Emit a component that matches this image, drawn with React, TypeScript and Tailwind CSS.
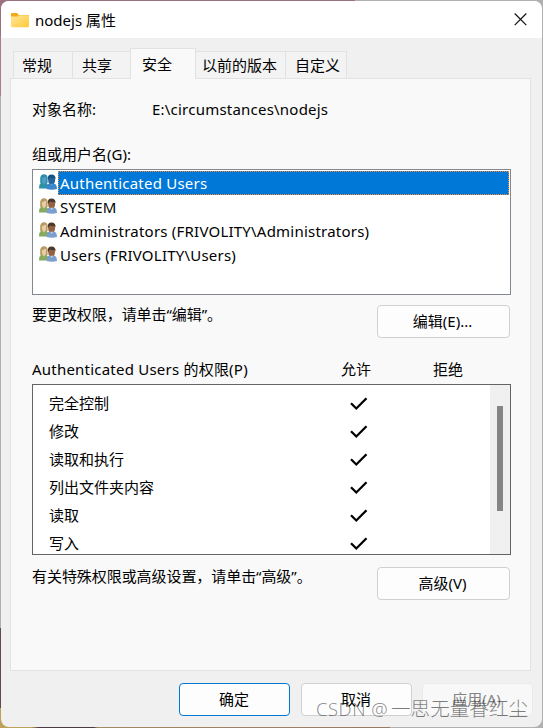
import React, { useState } from "react";

const TABS = [
  { label: "常规", className: "w-[60px] border-x pl-[8px]" },
  { label: "共享", className: "w-[57px] pl-[9px]" },
  { label: "安全", className: "w-[66px] border-x pl-[11px]" },
  { label: "以前的版本", className: "w-[90px] border-r pl-[6px]" },
  { label: "自定义", className: "w-[61px] border-r pl-[9px]" },
];

const GROUPS = [
  "Authenticated Users",
  "SYSTEM",
  "Administrators (FRIVOLITY\\Administrators)",
  "Users (FRIVOLITY\\Users)",
];

const PERMISSIONS = [
  "完全控制",
  "修改",
  "读取和执行",
  "列出文件夹内容",
  "读取",
  "写入",
];

const FolderIcon = () => (
  <svg width="19" height="16" viewBox="0 0 19 16">
    <defs>
      <linearGradient id="folder" x1="0" y1="0" x2="1" y2="1">
        <stop offset="0" stopColor="#ffe69b" />
        <stop offset="1" stopColor="#ffc937" />
      </linearGradient>
    </defs>
    <path d="M1 2Q1 1 2 1H6.500q1 0 1.500 1l.7 1H18q1 0 1 1v4H1z" fill="#f2ab14" />
    <path d="M1 4.500h6.500L9 3.200h8.800q1.200 0 1.200 1.200V14q0 1.200-1.200 1.200H2.200Q1 15.200 1 14z" fill="url(#folder)" />
  </svg>
);

const UsersIcon = ({ selected }: { selected: boolean }) => {
  const c = selected
    ? { hair: "#2d8fae", face: "#4f9fc4", top: "#2f91a8", hair2: "#17517f", face2: "#26649a", top2: "#3c86cc" }
    : { hair: "#b99a62", face: "#e6cda6", top: "#86a95c", hair2: "#4a382c", face2: "#916242", top2: "#7b9fce" };
  return (
    <svg width="18" height="16" viewBox="0 0 18 16" className="-mt-[3px]">
      <path d="M0 14.500q0-5 2.500-5.800l5 .2q2 1 2 5.600z" fill={c.top} />
      <path d="M1.200 9V4.200Q1.500.300 5 .300t3.600 3.500V9z" fill={c.hair} />
      <path d="M3 4.200Q5 3.500 7 2.500q.9 6.300-2 6.700-2.400-.6-2-5z" fill={c.face} />
      <path d="M3.500 8.600L5 10.800l1.500-2.200v-1h-3z" fill={c.face} />
      <path d="M7.500 15q-.2-4.800 3-5.800h4q3.500.8 3.500 5.800-5.200 1.300-10.500 0z" fill={c.top2} />
      <ellipse cx="12.600" cy="5.700" rx="3.500" ry="4.600" fill={c.face2} />
      <path d="M8.800 5.500Q8.300.600 12.500.600t4.200 4.900l-.9-1.400q-2.700.3-4.500-.6-1.500.6-1.600 2z" fill={c.hair2} />
      <path d="M11.400 9.700l1.300 2 1.300-2z" fill={selected ? "#5ba0dc" : "#dce6f2"} />
    </svg>
  );
};

const CheckIcon = () => (
  <svg width="18" height="14" viewBox="0 0 18 14">
    <path d="M1 6.300l5.300 5.200L16.500 1.200" fill="none" stroke="#000" strokeWidth="2.300" />
  </svg>
);

const App = () => {
  const [activeTab, setActiveTab] = useState("安全");
  const [selected, setSelected] = useState(GROUPS[0]);

  return (
    <div className="relative flex h-[728px] w-[543px] flex-col overflow-hidden bg-[#b0b0b0] font-['Noto_Sans','Noto_Sans_CJK_SC',sans-serif] text-[15px] leading-5 text-black">
      {/* desktop showing around the window edge */}
      <div className="flex h-9 w-full shrink-0">
        <div className="w-[355px] bg-[#9b7080]" />
      </div>
      <div className="h-[60px] w-2 shrink-0 bg-[#a87f88]" />
      <div className="mt-auto h-[80px] w-2 shrink-0 bg-[#5f4a4c]" />
      <div className="h-5 w-[390px] shrink-0 bg-[linear-gradient(90deg,#bfa25a_0%,#bfa25a_8%,#4a3c44_10%,#4a3c44_24%,#a08a60_25%,#9b7868_100%)]" />

      <div className="absolute inset-px flex flex-col overflow-hidden rounded-lg bg-[#f0f0f0]">
        <div className="flex h-[37px] shrink-0 items-center bg-white pl-[9px] pr-[15px]">
          <FolderIcon />
          <span className="ml-[6px]">nodejs 属性</span>
          <button type="button" className="ml-auto">
            <svg width="13" height="13" viewBox="0 0 13 13">
              <path d="M.7.500l11.600 11.600M12.300.500L.7 12.100" fill="none" stroke="#111" strokeWidth="1.200" />
            </svg>
          </button>
        </div>

        <div className="relative z-10 mt-[10px] flex h-[31px] shrink-0 items-end pl-[12px]">
          {TABS.map((tab) => (
            <button
              key={tab.label}
              type="button"
              onClick={() => setActiveTab(tab.label)}
              className={`shrink-0 whitespace-nowrap border-t border-[#e2e2e2] text-left ${tab.className} ${
                activeTab === tab.label
                  ? "h-[31px] bg-[#f9f9f9] pb-px"
                  : "mb-px h-[27px] bg-[#f3f3f3]"
              }`}
            >
              {tab.label}
            </button>
          ))}
        </div>

        <div className="-mt-px ml-[9px] h-[593px] w-[521px] shrink-0 border border-[#e2e2e2] bg-[#f9f9f9] pl-[21px]">
          <div className="flex pt-5">
            <span className="w-[120px]">对象名称:</span>
            <span className="tracking-[0.22px]">E:\circumstances\nodejs</span>
          </div>

          <div className="mt-[25px]">组或用户名(G):</div>
          <div className="mt-[5px] h-[126px] w-[479px] border border-[#828790] bg-white p-px">
            {GROUPS.map((group) => (
              <div
                key={group}
                onClick={() => setSelected(group)}
                className="flex h-6 items-center pl-[5px]"
              >
                <UsersIcon selected={selected === group} />
                <span
                  className={`ml-px flex h-6 flex-1 items-center whitespace-nowrap border pl-px tracking-[0.22px] ${
                    selected === group
                      ? "border-dotted border-[#ff8728] bg-[#0078d7] text-white"
                      : "border-transparent"
                  }`}
                >
                  {group}
                </span>
              </div>
            ))}
          </div>

          <div className="mt-[10px] flex w-[478px] justify-between">
            <span className="-mt-px tracking-[-0.06px]">要更改权限，请单击“编辑”。</span>
            <button type="button" className="h-[33px] w-[133px] rounded border border-[#d0d0d0] bg-[#fdfdfd] pb-0.5 pr-0.5">
              编辑(E)...
            </button>
          </div>

          <div className="mt-[21px] flex">
            <span className="w-[309px] tracking-[0.22px]">{selected} 的权限(P)</span>
            <span className="w-[92px]">允许</span>
            <span>拒绝</span>
          </div>
          <div className="mt-[5px] flex h-[171px] w-[479px] overflow-hidden border border-[#646464] bg-white">
            <div className="flex-1 pt-[5px]">
              {PERMISSIONS.map((permission) => (
                <div key={permission} className="flex h-7 items-center pl-4">
                  <span className="w-[301px] pb-0.5">{permission}</span>
                  <CheckIcon />
                </div>
              ))}
            </div>
            <div className="w-5 bg-[#f0f0f0] pl-[7px] pt-[21px]">
              <div className="h-[105px] w-[6px] bg-[#858585]" />
            </div>
          </div>

          <div className="mt-3 flex w-[478px] justify-between">
            <span className="-mt-px tracking-[-0.06px]">有关特殊权限或高级设置，请单击“高级”。</span>
            <button type="button" className="h-[33px] w-[133px] rounded border border-[#d0d0d0] bg-[#fdfdfd] pb-0.5 pr-0.5">
              高级(V)
            </button>
          </div>
        </div>

        <div className="mt-3 flex gap-[11px] pl-[178px]">
          <button type="button" className="h-[33px] w-[111px] rounded border border-[#0078d4] bg-[#fdfdfd] pb-px pr-px">
            确定
          </button>
          <button type="button" className="h-[33px] w-[111px] rounded border border-[#d0d0d0] bg-[#fdfdfd] pb-px pr-px">
            取消
          </button>
          <button type="button" className="-ml-px h-[33px] w-[111px] rounded border border-[#eaeaea] bg-[#f8f8f8] pb-px pr-0.5 text-[#838383]">
            应用(A)
          </button>
        </div>
      </div>

      <span className="absolute left-[316px] top-[697px] flex whitespace-nowrap font-['Open_Sans','Noto_Sans_CJK_SC',sans-serif] text-[19.6px] font-light leading-6 text-black/50">
        <span className="w-[75px] whitespace-pre text-[18.500px] tracking-[0.500px]">CSDN @</span>
        <span>一思无量眷红尘</span>
      </span>
    </div>
  );
};

export default App;
